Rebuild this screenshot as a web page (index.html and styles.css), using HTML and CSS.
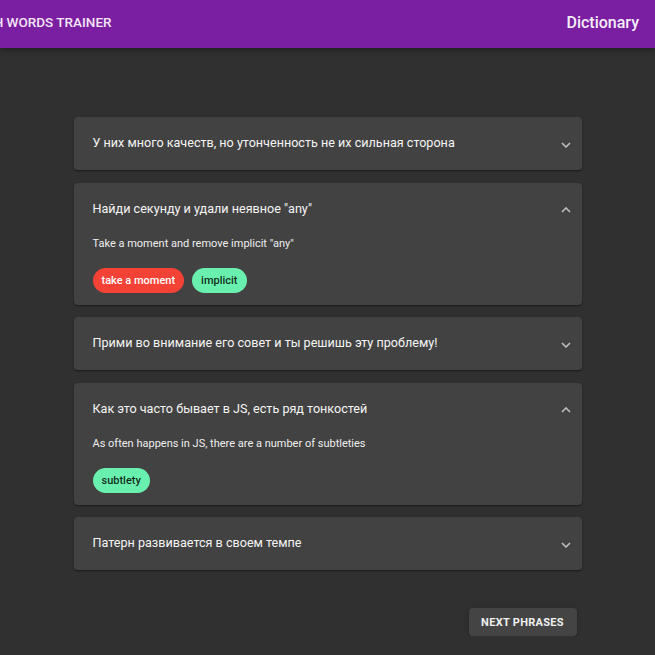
FILE: index.html
```html
<!DOCTYPE html>
<html>
<head>
<meta charset="utf-8">
<link rel="stylesheet" href="styles.css">
</head>
<body>
<header class="appbar">
  <div class="brand">ENGLISH WORDS TRAINER</div>
  <div class="nav">Dictionary</div>
</header>
<main class="content">
  <section class="card">
    <div class="summary">
      <span class="title">У них много качеств, но утонченность не их сильная сторона</span>
      <svg class="chev" width="10" height="6" viewBox="0 0 10 6"><polyline points="1,1 5,5 9,1" /></svg>
    </div>
  </section>
  <section class="card">
    <div class="summary">
      <span class="title">Найди секунду и удали неявное "any"</span>
      <svg class="chev" width="10" height="6" viewBox="0 0 10 6"><polyline points="1,5 5,1 9,5" /></svg>
    </div>
    <div class="details">
      <p class="translation">Take a moment and remove implicit "any"</p>
      <div class="chips">
        <span class="chip chip-red">take a moment</span>
        <span class="chip chip-green">implicit</span>
      </div>
    </div>
  </section>
  <section class="card">
    <div class="summary">
      <span class="title">Прими во внимание его совет и ты решишь эту проблему!</span>
      <svg class="chev" width="10" height="6" viewBox="0 0 10 6"><polyline points="1,1 5,5 9,1" /></svg>
    </div>
  </section>
  <section class="card">
    <div class="summary">
      <span class="title">Как это часто бывает в JS, есть ряд тонкостей</span>
      <svg class="chev" width="10" height="6" viewBox="0 0 10 6"><polyline points="1,5 5,1 9,5" /></svg>
    </div>
    <div class="details">
      <p class="translation">As often happens in JS, there are a number of subtleties</p>
      <div class="chips">
        <span class="chip chip-green">subtlety</span>
      </div>
    </div>
  </section>
  <section class="card">
    <div class="summary">
      <span class="title">Патерн развивается в своем темпе</span>
      <svg class="chev" width="10" height="6" viewBox="0 0 10 6"><polyline points="1,1 5,5 9,1" /></svg>
    </div>
  </section>
  <div class="actions">
    <button class="btn">NEXT PHRASES</button>
  </div>
</main>
</body>
</html>
```
FILE: styles.css
```css
html, body {
  margin: 0;
  padding: 0;
  background: #303030;
  font-family: Roboto, "Noto Sans", sans-serif;
  color: #fff;
  overflow: hidden;
}
.appbar {
  height: 48px;
  background: #7b1fa2;
  display: flex;
  align-items: center;
  justify-content: space-between;
  padding: 0 16px 4px 0;
  box-sizing: border-box;
  box-shadow: 0 2px 4px -1px rgba(0,0,0,0.2), 0 4px 5px 0 rgba(0,0,0,0.14);
}
.brand {
  font-size: 13.5px;
  font-weight: 500;
  margin-left: -52px;
  white-space: nowrap;
  color: #f3e5f5;
}
.nav {
  font-size: 16px;
  font-weight: 500;
  color: #f5eef8;
}
.content {
  width: 508px;
  margin: 69px auto 0;
  display: flex;
  flex-direction: column;
  gap: 12.5px;
}
.card {
  background: #424242;
  border-radius: 4px;
  box-shadow: 0 2px 1px -1px rgba(0,0,0,0.2), 0 1px 1px 0 rgba(0,0,0,0.14), 0 1px 3px 0 rgba(0,0,0,0.12);
}
.summary {
  height: 53px;
  display: flex;
  align-items: center;
  justify-content: space-between;
  padding: 0 11px 2px 19px;
  box-sizing: border-box;
}
.title {
  font-size: 12.6px;
  font-weight: 400;
  color: #f5f5f5;
}
.chev {
  fill: none;
  stroke: #bdbdbd;
  stroke-width: 1.6;
  margin-top: 4px;
}
.details {
  padding: 0 19px 12px;
}
.translation {
  margin: 0;
  font-size: 11px;
  line-height: 16px;
  color: #eeeeee;
}
.chips {
  display: flex;
  gap: 8px;
  margin-top: 16px;
}
.chip {
  height: 25px;
  line-height: 25px;
  border-radius: 13px;
  padding: 0 9px;
  font-size: 11px;
  font-weight: 500;
}
.chip-red {
  background: #f44336;
  color: #fff;
}
.chip-green {
  background: #69f0ae;
  color: rgba(0,0,0,0.85);
}
.actions {
  display: flex;
  justify-content: flex-end;
  padding: 25.5px 5px 0 0;
}
.btn {
  height: 28px;
  width: 108px;
  border: none;
  border-radius: 4px;
  background: #444444;
  color: #f0f0f0;
  font-family: Roboto, sans-serif;
  font-size: 11px;
  font-weight: 700;
  letter-spacing: 0.3px;
  box-shadow: 0 3px 1px -2px rgba(0,0,0,0.2), 0 2px 2px 0 rgba(0,0,0,0.14), 0 1px 5px 0 rgba(0,0,0,0.12);
}
```
